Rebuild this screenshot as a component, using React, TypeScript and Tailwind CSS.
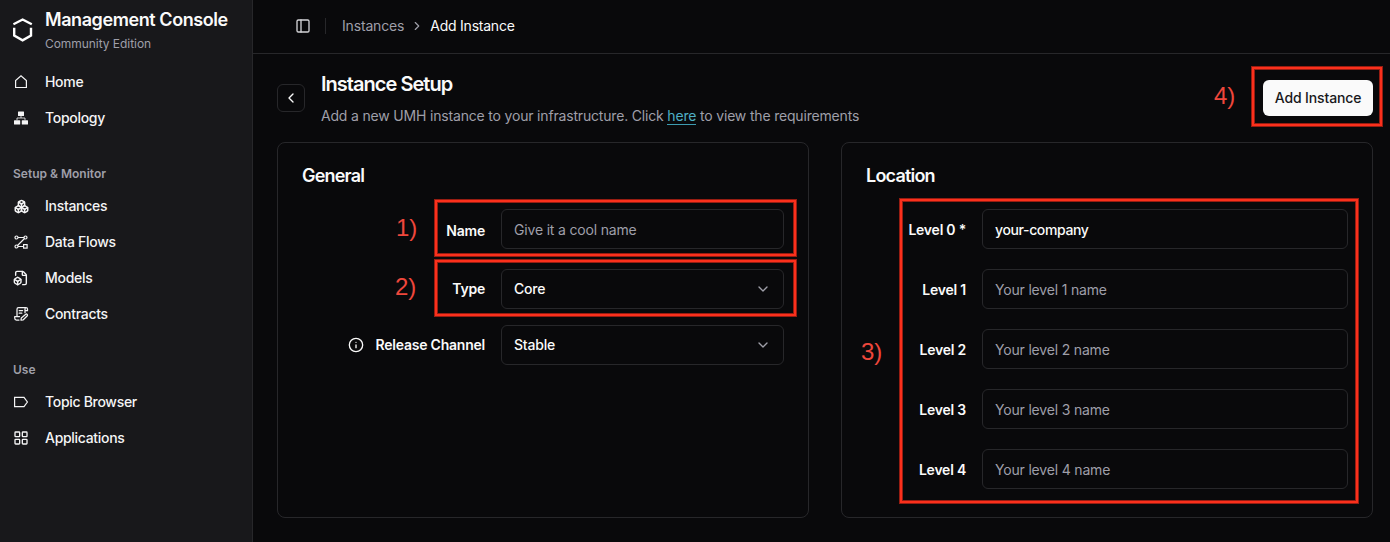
import React from "react";
import {
  PanelLeft,
  ChevronRight,
  ChevronLeft,
  ChevronDown,
  Info,
  FileBox,
  Boxes,
  LayoutGrid,
} from "lucide-react";

const HomeIcon = () => (
  <svg width="16" height="16" viewBox="0 0 16 16" fill="none" stroke="currentColor" strokeWidth="1.2">
    <path d="M2.600 13.500V6.600L8 1.800l5.400 4.800v6.900z" />
  </svg>
);

const TopologyIcon = () => (
  <svg width="16" height="16" viewBox="0 0 16 16" fill="currentColor">
    <rect x="5" y="1.600" width="6" height="4.400" rx=".5" />
    <rect x="1" y="10.200" width="6.200" height="4.200" rx=".5" />
    <rect x="8.800" y="10.200" width="6.200" height="4.200" rx=".5" />
    <path d="M8 6v2M4 10.200V8h8v2.200" fill="none" stroke="currentColor" strokeWidth=".8" />
  </svg>
);

const FlowIcon = () => (
  <svg width="16" height="16" viewBox="0 0 16 16" fill="none" stroke="currentColor" strokeWidth="1.2">
    <circle cx="3.500" cy="3.500" r="1.500" />
    <circle cx="12.500" cy="3.500" r="1.500" />
    <circle cx="3.500" cy="12.500" r="1.500" />
    <rect x="10.600" y="10.600" width="3.500" height="3.500" />
    <path d="M5 3.500h6M11.500 4.500l-7 7M5 12.500h5.600" />
  </svg>
);

const ContractIcon = () => (
  <svg width="16" height="16" viewBox="0 0 16 16" fill="none" stroke="currentColor" strokeWidth="1.25" strokeLinejoin="round" strokeLinecap="round">
    <path d="M4 10.500V3.200C4 2.200 4.600 1.600 5.500 1.600H13c1 0 1.500.7 1.500 1.500v1.600H12V3c0-.8.400-1.400 1-1.400M12 4.700v2M6.200 4.600h3.400M6.200 7.200h2.600M6.500 10.600H1.700v1.500c0 1.200.7 1.900 1.800 1.900H6" />
    <path d="M8 14.200l.3-2.300 4.500-3.700c.9-.6 2.200.7 1.500 1.600l-4 4z" />
  </svg>
);

const TagIcon = () => (
  <svg width="16" height="16" viewBox="0 0 16 16" fill="none" stroke="currentColor" strokeWidth="1.2">
    <path d="M1.600 3.400h9.400l3.400 4.600-3.400 4.600H1.600z" />
  </svg>
);

const Logo = () => (
  <svg width="20" height="24" viewBox="0 0 20 24" fill="none" stroke="white" strokeWidth="2.4">
    <path d="M.4 6.300L9.600 1.500l9.200 4.800" />
    <path d="M1.200 9.700v7.800l8.400 4.900 8.400-4.900V9.700" />
  </svg>
);

function NavItem({ icon, label }: { icon: React.ReactNode; label: string }) {
  return (
    <a className="flex h-9 items-center gap-4 text-zinc-100">
      <span className="flex w-4 justify-center">{icon}</span>
      <span className="text-sm font-medium tracking-[-0.3px]">{label}</span>
    </a>
  );
}

function Field({ label, value, placeholder, select, labelIcon, labelWidth, labelShift = "" }: {
  label: string;
  value?: string;
  placeholder?: string;
  select?: boolean;
  labelIcon?: React.ReactNode;
  labelWidth: string;
  labelShift?: string;
}) {
  return (
    <div className="flex h-10 items-center gap-4">
      <div className={`flex shrink-0 items-center justify-end gap-3 text-sm font-semibold tracking-[-0.23px] whitespace-nowrap ${labelWidth} ${labelShift}`}>
        {labelIcon}
        <span>{label}</span>
      </div>
      <div className={`flex h-10 flex-1 items-center justify-between rounded-md border border-zinc-800 px-3 text-sm ${select ? "" : "pt-0.5"}`}>
        {value ? (
          <span className={`font-medium ${select ? "tracking-[-0.2px]" : "tracking-[-0.37px]"}`}>{value}</span>
        ) : (
          <span className="tracking-[-0.18px] text-zinc-400">{placeholder}</span>
        )}
        {select && <ChevronDown size={16} className="text-zinc-400" strokeWidth={2} />}
      </div>
    </div>
  );
}

function Mark({ className }: { className: string }) {
  return (
    <div
      className={`absolute border-2 border-[#fb301c] shadow-[0_0_0_1px_#961d12,inset_0_0_0_1px_#961d12] ${className}`}
    />
  );
}

function Num({ className, children }: { className: string; children: React.ReactNode }) {
  return <span className={`absolute font-['Liberation_Sans',sans-serif] text-2xl leading-6 text-[#ee473c] ${className}`}>{children}</span>;
}

export default function App() {
  return (
    <div className="relative flex h-[542px] w-[1390px] overflow-hidden bg-[#09090b] font-['Inter',sans-serif] text-zinc-50 antialiased">
      <aside className="flex w-[253px] shrink-0 flex-col border-r border-zinc-800 bg-[#18181b] px-[13px]">
        <div className="flex h-16 gap-3">
          <div className="pt-[18px]"><Logo /></div>
          <div>
            <div className="mt-1.5 text-lg leading-7 font-semibold tracking-[-0.42px]">Management Console</div>
            <div className="text-xs leading-5 tracking-[-0.05px] text-zinc-400">Community Edition</div>
          </div>
        </div>
        <nav>
          <NavItem icon={<HomeIcon />} label="Home" />
          <NavItem icon={<TopologyIcon />} label="Topology" />
        </nav>
        <div className="mt-[26px] flex h-6 items-center text-xs font-semibold text-zinc-400">Setup &amp; Monitor</div>
        <nav className="mt-0.5">
          <NavItem icon={<Boxes size={15} strokeWidth={2.4} />} label="Instances" />
          <NavItem icon={<FlowIcon />} label="Data Flows" />
          <NavItem icon={<FileBox size={16} strokeWidth={2.1} />} label="Models" />
          <NavItem icon={<ContractIcon />} label="Contracts" />
        </nav>
        <div className="mt-[26px] flex h-6 items-center text-xs font-semibold text-zinc-400">Use</div>
        <nav className="mt-0.5">
          <NavItem icon={<TagIcon />} label="Topic Browser" />
          <NavItem icon={<LayoutGrid size={16} />} label="Applications" />
        </nav>
      </aside>

      <main className="flex flex-1 flex-col">
        <header className="flex h-[54px] items-center border-b border-zinc-800 pb-px pl-[42px] text-sm">
          <PanelLeft size={16} className="text-zinc-300" />
          <div className="ml-[14px] h-4 w-px bg-zinc-800" />
          <span className="ml-4 tracking-[-0.17px] text-zinc-400">Instances</span>
          <ChevronRight size={14} className="mx-1.5 text-zinc-400" />
          <span className="tracking-[-0.23px]">Add Instance</span>
        </header>
        <section className="flex h-[88px] items-center pr-[17px] pl-6">
          <button className="flex size-7 items-center justify-center rounded-md border border-zinc-800"><ChevronLeft size={16} /></button>
          <div className="ml-4 flex-1">
            <h1 className="text-xl leading-7 font-semibold tracking-[-0.97px]">Instance Setup</h1>
            <p className="mt-2 text-sm tracking-[-0.18px] text-zinc-400">
              Add a new UMH instance to your infrastructure. Click <a className="border-b border-[#3d9bb0] text-[#4fb0c6]">here</a> to view the requirements
            </p>
          </div>
          <button className="h-9 w-[110px] rounded-md bg-zinc-50 text-sm font-medium tracking-[-0.13px] whitespace-nowrap text-zinc-900">Add Instance</button>
        </section>
        <div className="grid h-[376px] grid-cols-2 gap-8 pr-[17px] pl-6">
          <section className="rounded-lg border border-zinc-800 px-6 pt-[19px]">
            <h2 className="text-lg leading-7 font-semibold tracking-[-0.8px]">General</h2>
            <div className="mt-[19px] flex flex-col">
              <Field label="Name" placeholder="Give it a cool name" labelWidth="w-[183px]" labelShift="pt-1" />
              <div className="mt-5"><Field label="Type" value="Core" select labelWidth="w-[183px]" /></div>
              <div className="mt-4"><Field label="Release Channel" value="Stable" select labelIcon={<Info size={16} />} labelWidth="w-[183px]" /></div>
            </div>
          </section>
          <section className="rounded-lg border border-zinc-800 px-6 pt-[19px]">
            <h2 className="text-lg leading-7 font-semibold tracking-[-0.8px]">Location</h2>
            <div className="mt-[19px] flex flex-col gap-5">
              <Field label="Level 0 *" value="your-company" labelWidth="w-[100px]" labelShift="pt-0.5" />
              <Field label="Level 1" placeholder="Your level 1 name" labelWidth="w-[100px]" labelShift="pt-0.5" />
              <Field label="Level 2" placeholder="Your level 2 name" labelWidth="w-[100px]" labelShift="pt-0.5" />
              <Field label="Level 3" placeholder="Your level 3 name" labelWidth="w-[100px]" labelShift="pt-0.5" />
              <Field label="Level 4" placeholder="Your level 4 name" labelWidth="w-[100px]" labelShift="pt-0.5" />
            </div>
          </section>
        </div>
      </main>

      <Mark className="top-[200px] left-[435px] h-[56px] w-[361px]" />
      <Mark className="top-[260px] left-[435px] h-[56px] w-[361px]" />
      <Mark className="top-[199px] left-[900px] h-[304px] w-[458px]" />
      <Mark className="top-[67px] left-[1252px] h-[59px] w-[130px]" />
      <Num className="top-[216px] left-[396px]">1)</Num>
      <Num className="top-[275px] left-[395px]">2)</Num>
      <Num className="top-[340px] left-[861px]">3)</Num>
      <Num className="top-[84px] left-[1214px]">4)</Num>
    </div>
  );
}
